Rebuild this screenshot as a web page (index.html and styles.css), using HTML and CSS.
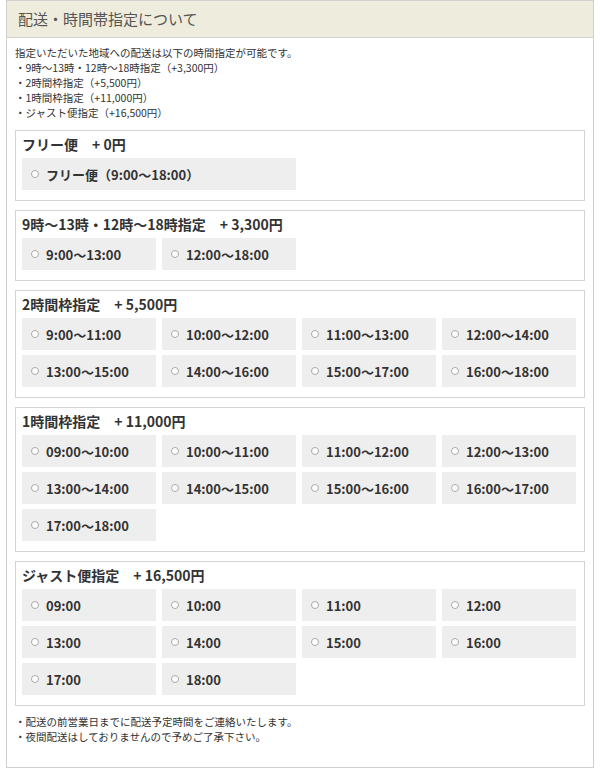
FILE: index.html
```html
<!DOCTYPE html>
<html lang="ja">
<head>
  <meta charset="UTF-8">
  <meta name="viewport" content="width=device-width, initial-scale=1.0">
  <title>配送・時間帯指定について</title>
  <link rel="stylesheet" href="styles.css">
</head>
<body>
  <div class="delivery">
    <h2 class="delivery-head">配送・時間帯指定について</h2>

    <div class="delivery-body">
      <p class="note">
        指定いただいた地域への配送は以下の時間指定が可能です。<br>
        ・9時～13時・12時～18時指定（+3,300円）<br>
        ・2時間枠指定（+5,500円）<br>
        ・1時間枠指定（+11,000円）<br>
        ・ジャスト便指定（+16,500円）
      </p>

      <div class="slot-box">
        <h3>フリー便　+ 0円</h3>
        <div class="slots">
          <label class="slot wide"><span class="radio"></span>フリー便（9:00～18:00）</label>
        </div>
      </div>

      <div class="slot-box">
        <h3>9時～13時・12時～18時指定　+ 3,300円</h3>
        <div class="slots">
          <label class="slot"><span class="radio"></span>9:00～13:00</label>
          <label class="slot"><span class="radio"></span>12:00～18:00</label>
        </div>
      </div>

      <div class="slot-box">
        <h3>2時間枠指定　+ 5,500円</h3>
        <div class="slots">
          <label class="slot"><span class="radio"></span>9:00～11:00</label>
          <label class="slot"><span class="radio"></span>10:00～12:00</label>
          <label class="slot"><span class="radio"></span>11:00～13:00</label>
          <label class="slot"><span class="radio"></span>12:00～14:00</label>
          <label class="slot"><span class="radio"></span>13:00～15:00</label>
          <label class="slot"><span class="radio"></span>14:00～16:00</label>
          <label class="slot"><span class="radio"></span>15:00～17:00</label>
          <label class="slot"><span class="radio"></span>16:00～18:00</label>
        </div>
      </div>

      <div class="slot-box">
        <h3>1時間枠指定　+ 11,000円</h3>
        <div class="slots">
          <label class="slot"><span class="radio"></span>09:00～10:00</label>
          <label class="slot"><span class="radio"></span>10:00～11:00</label>
          <label class="slot"><span class="radio"></span>11:00～12:00</label>
          <label class="slot"><span class="radio"></span>12:00～13:00</label>
          <label class="slot"><span class="radio"></span>13:00～14:00</label>
          <label class="slot"><span class="radio"></span>14:00～15:00</label>
          <label class="slot"><span class="radio"></span>15:00～16:00</label>
          <label class="slot"><span class="radio"></span>16:00～17:00</label>
          <label class="slot"><span class="radio"></span>17:00～18:00</label>
        </div>
      </div>

      <div class="slot-box">
        <h3>ジャスト便指定　+ 16,500円</h3>
        <div class="slots">
          <label class="slot"><span class="radio"></span>09:00</label>
          <label class="slot"><span class="radio"></span>10:00</label>
          <label class="slot"><span class="radio"></span>11:00</label>
          <label class="slot"><span class="radio"></span>12:00</label>
          <label class="slot"><span class="radio"></span>13:00</label>
          <label class="slot"><span class="radio"></span>14:00</label>
          <label class="slot"><span class="radio"></span>15:00</label>
          <label class="slot"><span class="radio"></span>16:00</label>
          <label class="slot"><span class="radio"></span>17:00</label>
          <label class="slot"><span class="radio"></span>18:00</label>
        </div>
      </div>

      <p class="note footer-note">
        ・配送の前営業日までに配送予定時間をご連絡いたします。<br>
        ・夜間配送はしておりませんので予めご了承下さい。
      </p>
    </div>
  </div>
</body>
</html>
```

FILE: styles.css
```css
/* General */
body {
  margin: 0;
  padding: 0 6px;
  background-color: #fff;
  color: #333;
  font-family: "Noto Sans CJK JP", "DejaVu Sans", sans-serif;
}

.delivery {
  width: 586px;
  border: 1px solid #cfcfcf;
}

.delivery-head {
  margin: 0;
  height: 36px;
  line-height: 36px;
  padding: 0 11px;
  background-color: #eeecdc;
  border-bottom: 1px solid #cfcfcf;
  color: #555;
  font-size: 15px;
  font-weight: normal;
}

.delivery-body {
  padding: 7px 8px 23px;
}

.note {
  margin: 0 0 10px;
  font-size: 10.5px;
  line-height: 15px;
}

.footer-note {
  margin: 8px 0 0;
}

/* Slot boxes */
.slot-box {
  border: 1px solid #d3d3d3;
  padding: 4px 6px 10px;
  margin-bottom: 9px;
}

.slot-box:last-of-type {
  margin-bottom: 0;
}

.slot-box h3 {
  margin: 0 0 5px;
  font-size: 14px;
  line-height: 18px;
  font-weight: bold;
}

.slots {
  display: grid;
  grid-template-columns: repeat(4, 134px);
  gap: 5px 6px;
}

.slot {
  display: flex;
  align-items: center;
  height: 32px;
  padding-left: 9px;
  background-color: #eee;
  font-size: 13px;
  font-weight: bold;
}

.slot.wide {
  grid-column: span 2;
}

.radio {
  width: 6px;
  height: 6px;
  border: 1px solid #aaa;
  border-radius: 50%;
  background-color: #fff;
  margin-right: 7px;
}
```
